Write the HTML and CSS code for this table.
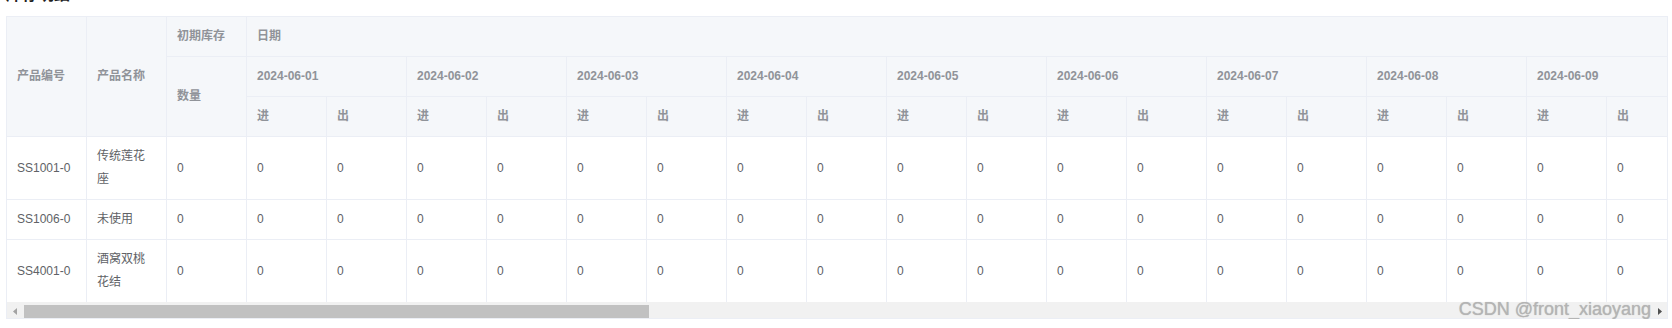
FILE: index.html
```html
<!DOCTYPE html>
<html lang="zh-CN">
<head>
    <meta charset="UTF-8">
    <meta name="viewport" content="width=device-width, initial-scale=1.0">
    <title>库存明细</title>
    <link rel="stylesheet" href="styles.css">
</head>
<body>
    <div class="page">
        <div class="title">库存明细</div>
        <div class="table-wrap">
            <div class="table-body">
                <table class="stock-table" id="stockTable">
                    <colgroup id="cols"></colgroup>
                    <thead id="tableHead"></thead>
                    <tbody id="tableBody"></tbody>
                </table>
            </div>
            <div class="scrollbar">
                <div class="scroll-btn">
                    <svg width="17" height="16" viewBox="0 0 17 16"><path d="M10 6 L6 9.5 L10 13 Z" fill="#a3a3a3"/></svg>
                </div>
                <div class="scroll-track">
                    <div class="scroll-thumb" id="thumb"></div>
                </div>
                <div class="scroll-btn">
                    <svg width="17" height="16" viewBox="0 0 17 16"><path d="M8 6 L12 9.5 L8 13 Z" fill="#505050"/></svg>
                </div>
            </div>
            <div class="watermark">CSDN @front_xiaoyang</div>
        </div>
    </div>

    <script>
        const days = 25;
        const products = [
            { code: 'SS1001-0', name: '传统莲花座' },
            { code: 'SS1006-0', name: '未使用' },
            { code: 'SS4001-0', name: '酒窝双桃花结' }
        ];

        function cell(tag, text, attrs) {
            const el = document.createElement(tag);
            const inner = document.createElement('div');
            inner.className = 'cell';
            inner.textContent = text;
            el.appendChild(inner);
            if (attrs) {
                for (const key in attrs) el.setAttribute(key, attrs[key]);
            }
            return el;
        }

        function buildTable() {
            const cols = document.getElementById('cols');
            const head = document.getElementById('tableHead');
            const body = document.getElementById('tableBody');
            const total = 3 + days * 2;

            for (let i = 0; i < total; i++) {
                cols.appendChild(document.createElement('col'));
            }
            document.getElementById('stockTable').style.width = (total * 80) + 'px';

            const row1 = document.createElement('tr');
            row1.appendChild(cell('th', '产品编号', { rowspan: 3 }));
            row1.appendChild(cell('th', '产品名称', { rowspan: 3 }));
            row1.appendChild(cell('th', '初期库存'));
            row1.appendChild(cell('th', '日期', { colspan: days * 2 }));

            const row2 = document.createElement('tr');
            row2.appendChild(cell('th', '数量', { rowspan: 2 }));

            const row3 = document.createElement('tr');

            for (let d = 1; d <= days; d++) {
                const date = '2024-06-' + String(d).padStart(2, '0');
                row2.appendChild(cell('th', date, { colspan: 2 }));
                row3.appendChild(cell('th', '进'));
                row3.appendChild(cell('th', '出'));
            }

            head.appendChild(row1);
            head.appendChild(row2);
            head.appendChild(row3);

            products.forEach(function(p) {
                const tr = document.createElement('tr');
                tr.appendChild(cell('td', p.code));
                tr.appendChild(cell('td', p.name));
                tr.appendChild(cell('td', '0'));
                for (let i = 0; i < days * 2; i++) {
                    tr.appendChild(cell('td', '0'));
                }
                body.appendChild(tr);
            });

            const view = document.querySelector('.table-body').clientWidth;
            const track = document.querySelector('.scroll-track').clientWidth;
            document.getElementById('thumb').style.width = Math.round(track * view / 4317) + 'px';
        }

        buildTable();
    </script>
</body>
</html>
```

FILE: styles.css
```css
body {
    margin: 0;
    padding: 0;
    background: #fff;
    font-family: 'Liberation Sans', Arial, 'Noto Sans CJK SC', sans-serif;
    overflow: hidden;
}
.page {
    padding: 0 4px 0 6px;
}
.title {
    margin-top: -16px;
    margin-bottom: 10px;
    height: 22px;
    line-height: 22px;
    font-size: 16px;
    font-weight: 600;
    color: #1f1f1f;
}
.table-wrap {
    position: relative;
    border: 1px solid #ebeef5;
}
.table-body {
    overflow: hidden;
}
.scrollbar {
    display: flex;
    height: 16px;
    background: #f1f1f1;
}
.scroll-btn {
    width: 17px;
    height: 16px;
    flex-shrink: 0;
}
.scroll-btn svg {
    display: block;
}
.scroll-track {
    flex: 1;
    display: flex;
    align-items: flex-end;
}
.scroll-thumb {
    height: 13px;
    background: #c1c1c1;
}
.stock-table {
    table-layout: fixed;
    border-collapse: separate;
    border-spacing: 0;
    font-size: 12px;
}
.stock-table col {
    width: 80px;
}
.stock-table th,
.stock-table td {
    box-sizing: border-box;
    padding: 8px 0;
    border-right: 1px solid #ebeef5;
    border-bottom: 1px solid #ebeef5;
    text-align: left;
    vertical-align: middle;
}
.stock-table th {
    background-color: #f5f7fa;
    color: #909399;
    font-weight: bold;
}
.stock-table td {
    background-color: #fff;
    color: #606266;
}
.stock-table tbody tr:last-child td {
    border-bottom: none;
}
.cell {
    padding: 0 10px;
    line-height: 23px;
    word-break: break-all;
}
.watermark {
    position: absolute;
    right: 16px;
    bottom: -2px;
    font-size: 18px;
    line-height: 22px;
    color: #b4b4b4;
    text-shadow: 0 0 1px rgba(0, 0, 0, 0.25);
    pointer-events: none;
}
```
